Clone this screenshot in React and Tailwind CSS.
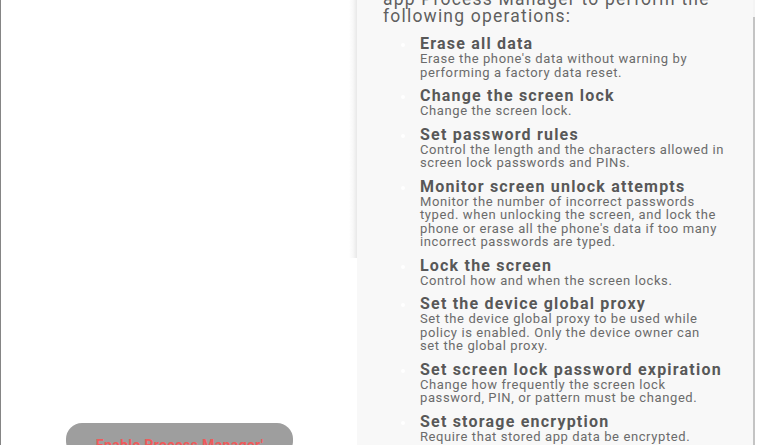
const permissions = [
  {
    title: "Erase all data",
    lines: ["Erase the phone's data without warning by", "performing a factory data reset."],
  },
  { title: "Change the screen lock", lines: ["Change the screen lock."] },
  {
    title: "Set password rules",
    lines: ["Control the length and the characters allowed in", "screen lock passwords and PINs."],
  },
  {
    title: "Monitor screen unlock attempts",
    lines: [
      "Monitor the number of incorrect passwords",
      "typed. when unlocking the screen, and lock the",
      "phone or erase all the phone's data if too many",
      "incorrect passwords are typed.",
    ],
  },
  { title: "Lock the screen", lines: ["Control how and when the screen locks."] },
  {
    title: "Set the device global proxy",
    lines: [
      "Set the device global proxy to be used while",
      "policy is enabled. Only the device owner can",
      "set the global proxy.",
    ],
  },
  {
    title: "Set screen lock password expiration",
    lines: ["Change how frequently the screen lock", "password, PIN, or pattern must be changed."],
  },
  { title: "Set storage encryption", lines: ["Require that stored app data be encrypted."] },
];

function Permission({ title, lines }) {
  return (
    <li className="relative pl-[63px]">
      <span className="absolute left-[44px] top-[7px] h-[4px] w-[4px] rounded-full bg-white" />
      <p className="whitespace-nowrap text-[16px] font-bold leading-[16px] tracking-[1.2px] text-[#585858]">
        {title}
      </p>
      {lines.map((line, i) => (
        <p key={i} className="whitespace-nowrap text-[13px] leading-[13.5px] tracking-[0.6px] text-[#6b6b6b]">
          {line}
        </p>
      ))}
    </li>
  );
}

export default function App() {
  return (
    <div
      className="flex h-[445px] w-[768px] overflow-hidden border-l border-[#858585] bg-white"
      style={{ fontFamily: "Roboto, 'Noto Sans', sans-serif" }}
    >
      {/* left side with the enable button */}
      <div className="flex w-[356px] shrink-0">
        <div className="flex-1 pt-[423px]">
          <div className="ml-[65px] h-[34px] w-[227px] rounded-[16px] bg-[#9e9e9e] pt-[10px] text-center">
            <span className="text-[14px] font-bold leading-[16px] tracking-[0.4px] text-[#ee5b5b]">
              Enable Process Manager'
            </span>
          </div>
        </div>
        <div className="flex w-[8px] flex-col">
          <div className="h-[258px] bg-gradient-to-r from-white via-[#f8f8f8] to-[#e8e8e8]" />
        </div>
      </div>

      {/* admin permissions panel */}
      <div className="w-[396px] shrink-0 bg-[#f8f8f8]">
        <div className="-mt-[9px] pl-[26px] text-[17.5px] leading-[17px] tracking-[1.2px] text-[#5f5f5f]">
          <p className="whitespace-nowrap">app Process Manager to perform the</p>
          <p className="whitespace-nowrap">following operations:</p>
        </div>
        <ul className="mt-[11px] flex flex-col gap-[9px]">
          {permissions.map((p) => (
            <Permission key={p.title} {...p} />
          ))}
        </ul>
      </div>

      {/* right edge */}
      <div className="flex flex-1">
        <div className="flex w-[2px] flex-col">
          <div className="h-[17px] bg-[#f4f4f4]" />
          <div className="flex-1 bg-[#c4c4c4]" />
        </div>
        <div className="flex-1 bg-white" />
      </div>
    </div>
  );
}
